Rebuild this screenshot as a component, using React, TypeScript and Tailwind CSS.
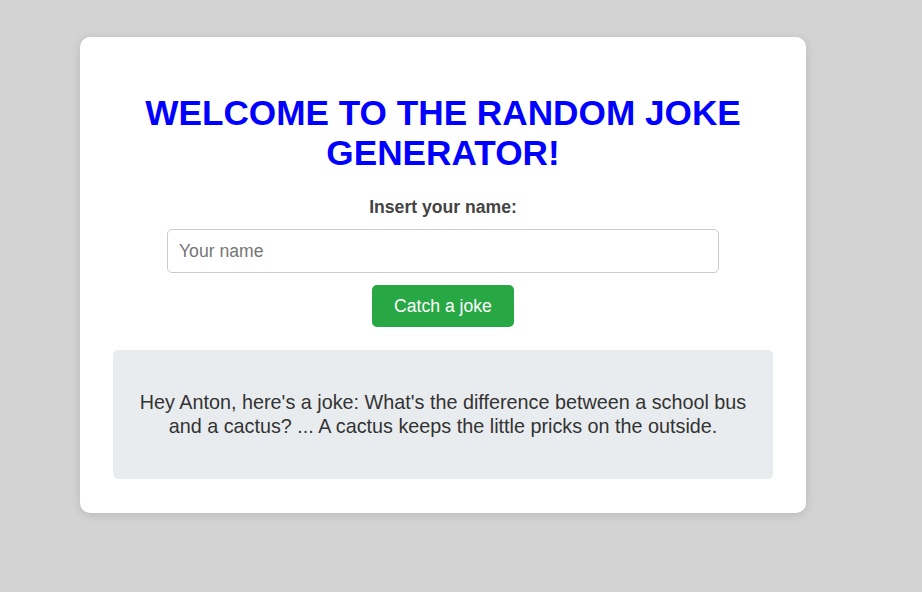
import { useState } from "react"

const JOKE = "What's the difference between a school bus and a cactus? ... A cactus keeps the little pricks on the outside."

function App() {
    const [name, setName] = useState("")

    return (
        <div className="min-h-[592px] bg-[#d3d3d3] pt-[37px] pl-[80px] font-['Liberation_Sans',Arial,sans-serif]">
            <div className="w-[726px] rounded-[10px] bg-white px-8 pt-8 pb-[34px] shadow-[0_2px_10px_rgba(0,0,0,0.12)] flex flex-col items-center text-center">
                <h1 className="my-[23.6px] text-[35.2px] leading-[1.15] font-bold text-[#0000ff]">
                    WELCOME TO THE RANDOM JOKE GENERATOR!
                </h1>
                <label htmlFor="name" className="block text-[17.6px] leading-[1.15] font-bold text-[#444]">
                    Insert your name:
                </label>
                <input
                    id="name"
                    value={name}
                    onChange={e => setName(e.target.value)}
                    placeholder="Your name"
                    className="mt-3 h-[44px] w-[552px] rounded-[5px] border border-[#ccc] px-[11px] text-[17.6px] text-[#333] placeholder:text-[#757575] outline-none"
                />
                <button className="mt-3 h-[42px] w-[142px] rounded-[5px] bg-[#28a745] text-[17.6px] text-white">
                    Catch a joke
                </button>
                <div className="mt-[23px] h-[129px] w-[660px] rounded-[5px] bg-[#e9ecef] px-5 flex items-center justify-center">
                    <p className="text-[19.8px] leading-[1.2] text-[#333]">
                        Hey Anton, here's a joke: {JOKE}
                    </p>
                </div>
            </div>
        </div>
    )
}

export default App
